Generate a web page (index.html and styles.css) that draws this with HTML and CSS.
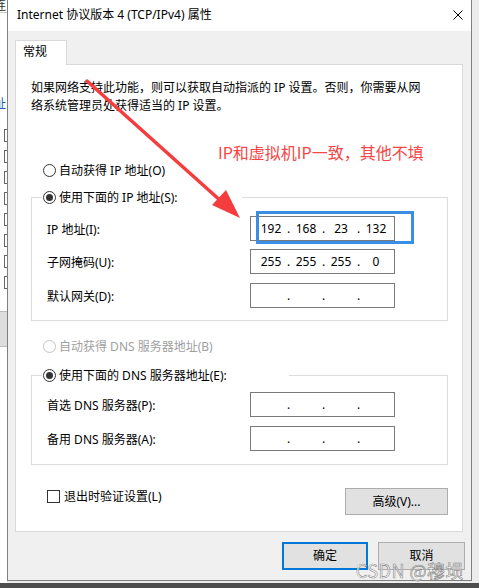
FILE: index.html
```html
<!DOCTYPE html>
<html lang="zh-CN">
<head>
  <meta charset="UTF-8" />
  <title>Internet 协议版本 4 (TCP/IPv4) 属性</title>
  <link rel="stylesheet" href="styles.css">
</head>
<body>

<div class="screen">
  <div class="desk">
    <div class="behind">
      <div class="behind-head">连</div>
      <div class="behind-char">址</div>
      <div class="behind-list">
        <span class="mini-box"></span>
        <span class="mini-box"></span>
        <span class="mini-box"></span>
        <span class="mini-box"></span>
        <span class="mini-box"></span>
        <span class="mini-box"></span>
        <span class="mini-box"></span>
        <span class="mini-box"></span>
      </div>
      <div class="behind-btn"></div>
    </div>

    <div class="dialog">
      <div class="titlebar">
        <span class="title">Internet 协议版本 4 (TCP/IPv4) 属性</span>
        <svg class="close" width="10" height="10" viewBox="0 0 10 10">
          <path d="M0.5 0.5 L9.5 9.5 M9.5 0.5 L0.5 9.5" stroke="#000" stroke-width="1" fill="none"/>
        </svg>
      </div>

      <div class="dlg-body">
        <div class="tabs"><div class="tab">常规</div></div>

        <div class="panel">
          <p class="intro">如果网络支持此功能，则可以获取自动指派的 IP 设置。否则，你需要从网<br>络系统管理员处获得适当的 IP 设置。</p>

          <div class="note">IP和虚拟机IP一致，其他不填</div>

          <div class="radio-row first-radio"><span class="radio"></span>自动获得 IP 地址(O)</div>

          <div class="group ip-group">
            <div class="group-title ip-title"><span class="radio checked"></span>使用下面的 IP 地址(S):</div>
            <div class="field first-field">
              <span class="field-label">IP 地址(I):</span>
              <div class="ip-box">
                <span class="seg">192</span><span class="dot">.</span><span class="seg">168</span><span class="dot">.</span><span class="seg">23</span><span class="dot">.</span><span class="seg">132</span>
                <span class="highlight"></span>
              </div>
            </div>
            <div class="field">
              <span class="field-label">子网掩码(U):</span>
              <div class="ip-box">
                <span class="seg">255</span><span class="dot">.</span><span class="seg">255</span><span class="dot">.</span><span class="seg">255</span><span class="dot">.</span><span class="seg">0</span>
              </div>
            </div>
            <div class="field third-field">
              <span class="field-label">默认网关(D):</span>
              <div class="ip-box">
                <span class="seg"></span><span class="dot">.</span><span class="seg"></span><span class="dot">.</span><span class="seg"></span><span class="dot">.</span><span class="seg"></span>
              </div>
            </div>
          </div>

          <div class="radio-row disabled dns-auto"><span class="radio"></span>自动获得 DNS 服务器地址(B)</div>

          <div class="group dns-group">
            <div class="group-title dns-title"><span class="radio checked"></span>使用下面的 DNS 服务器地址(E):</div>
            <div class="field dns-first">
              <span class="field-label">首选 DNS 服务器(P):</span>
              <div class="ip-box">
                <span class="seg"></span><span class="dot">.</span><span class="seg"></span><span class="dot">.</span><span class="seg"></span><span class="dot">.</span><span class="seg"></span>
              </div>
            </div>
            <div class="field dns-second">
              <span class="field-label">备用 DNS 服务器(A):</span>
              <div class="ip-box">
                <span class="seg"></span><span class="dot">.</span><span class="seg"></span><span class="dot">.</span><span class="seg"></span><span class="dot">.</span><span class="seg"></span>
              </div>
            </div>
          </div>

          <div class="panel-foot">
            <div class="check-row"><span class="checkbox"></span>退出时验证设置(L)</div>
            <button class="btn adv-btn">高级(V)...</button>
          </div>
        </div>

        <div class="buttons">
          <button class="btn ok-btn">确定</button>
          <button class="btn cancel-btn">取消</button>
        </div>
      </div>
    </div>

    <div class="right-strip"></div>
  </div>
  <div class="bottom-strip"></div>

  <svg class="arrow" width="479" height="588" viewBox="0 0 479 588">
    <line x1="87" y1="81" x2="222" y2="202" stroke="#f53d3d" stroke-width="3.5" stroke-linecap="round"/>
    <polygon points="240,218 212,205 226,190" fill="#f53d3d"/>
  </svg>

  <div class="watermark">CSDN @穆埙</div>
</div>

</body>
</html>
```

FILE: styles.css
```css
* {
  box-sizing: border-box;
}

body {
  margin: 0;
  font-family: "Noto Sans", "Noto Sans CJK SC", sans-serif;
  font-size: 12px;
  color: #000;
  background: #ececec;
}

.screen {
  position: relative;
  width: 479px;
  height: 588px;
  overflow: hidden;
  display: flex;
  flex-direction: column;
  background: #ececec;
}

.desk {
  display: flex;
  height: 583px;
}

/* window behind the dialog, only its edge shows */
.behind {
  width: 7px;
  overflow: hidden;
  background: #fff;
  display: flex;
  flex-direction: column;
}

.behind-head {
  height: 13px;
  line-height: 12px;
  margin-left: -6px;
  color: #333;
  border-bottom: 1px solid #c8c8c8;
  white-space: nowrap;
}

.behind-char {
  margin-top: 84px;
  margin-left: -6px;
  height: 14px;
  line-height: 14px;
  color: #2a5caa;
}

.behind-list {
  margin-top: 18px;
  display: flex;
  flex-direction: column;
  gap: 8px;
}

.mini-box {
  display: block;
  width: 10px;
  height: 13px;
  margin-left: 4px;
  border: 1px solid #666;
  background: #fff;
}

.behind-btn {
  margin-top: 22px;
  height: 36px;
  background: #dedede;
  border-top: 1px solid #bbb;
  border-bottom: 1px solid #bbb;
}

.dialog {
  width: 465px;
  height: 581px;
  border: 1px solid #7f7f7f;
  border-top: none;
  display: flex;
  flex-direction: column;
  background: #f0f0f0;
}

.titlebar {
  height: 31px;
  background: #fff;
  display: flex;
  align-items: center;
  justify-content: space-between;
  padding-left: 9px;
  padding-right: 8px;
}

.title {
  line-height: 16px;
  margin-top: -1px;
}

.close {
  display: block;
  margin-top: -1px;
}

.dlg-body {
  flex: 1;
  padding: 9px 8px 0 7px;
}

.tabs {
  display: flex;
  position: relative;
  z-index: 1;
  margin-bottom: -1px;
}

.tab {
  width: 52px;
  height: 25px;
  background: #fff;
  border: 1px solid #d9d9d9;
  border-bottom: none;
  padding-left: 7px;
  line-height: 22px;
}

.panel {
  height: 468px;
  background: #fff;
  border: 1px solid #d9d9d9;
  padding: 14px 0 0 15px;
}

.intro {
  margin: 0;
  line-height: 18px;
  white-space: nowrap;
}

.note {
  margin-top: 28px;
  padding-left: 187px;
  height: 18px;
  line-height: 18px;
  font-family: "Noto Sans CJK SC", sans-serif;
  font-size: 16px;
  color: #f84545;
}

.radio-row {
  display: flex;
  align-items: center;
  height: 20px;
  padding-left: 12px;
}

.first-radio {
  margin-top: -1px;
}

.radio {
  width: 13px;
  height: 13px;
  border: 1px solid #333;
  border-radius: 50%;
  margin-right: 3px;
  display: flex;
  align-items: center;
  justify-content: center;
  background: #fff;
}

.radio.checked::after {
  content: "";
  width: 7px;
  height: 7px;
  border-radius: 50%;
  background: #333;
}

.radio-row.disabled {
  color: #a0a0a0;
}

.radio-row.disabled .radio {
  border-color: #c4c4c4;
}

.group {
  width: 417px;
  border: 1px solid #dcdcdc;
}

.ip-group {
  margin-top: 17px;
  padding-bottom: 12px;
}

.dns-auto {
  margin-top: 15px;
}

.dns-group {
  margin-top: 19px;
  padding-bottom: 13px;
}

.group-title {
  display: flex;
  align-items: center;
  height: 20px;
  margin-top: -11px;
  margin-left: 10px;
  padding-left: 1px;
  background: #fff;
}

.ip-title {
  width: 200px;
}

.dns-title {
  width: 247px;
}

.field {
  display: flex;
  align-items: center;
  height: 25px;
  margin-top: 8px;
}

.first-field {
  margin-top: 9px;
}

.third-field {
  margin-top: 9px;
}

.dns-first {
  margin-top: 7px;
}

.dns-second {
  margin-top: 9px;
}

.field-label {
  width: 203px;
  margin-left: 15px;
}

.ip-box {
  position: relative;
  width: 145px;
  height: 25px;
  border: 1px solid #7a7a7a;
  background: #fff;
  display: grid;
  grid-template-columns: 28px 7px 28px 7px 28px 7px 28px;
  align-items: center;
  padding-left: 6px;
  line-height: 16px;
}

.seg {
  text-align: center;
}

.dot {
  text-align: center;
}

.highlight {
  position: absolute;
  left: 5px;
  top: -6px;
  width: 158px;
  height: 33px;
  border: 3px solid #3a8ee4;
}

.panel-foot {
  width: 417px;
  margin-top: 21px;
  display: flex;
  justify-content: space-between;
  align-items: flex-start;
}

.check-row {
  display: flex;
  align-items: center;
  height: 20px;
  padding-left: 16px;
}

.checkbox {
  width: 13px;
  height: 13px;
  border: 1px solid #333;
  background: #fff;
  margin-right: 4px;
}

.btn {
  font-family: "Noto Sans", "Noto Sans CJK SC", sans-serif;
  font-size: 12px;
  color: #000;
  background: #e1e1e1;
  border: 1px solid #adadad;
  padding: 0;
  line-height: 16px;
}

.adv-btn {
  width: 103px;
  height: 27px;
  margin-top: 2px;
}

.buttons {
  display: flex;
  justify-content: flex-end;
  gap: 10px;
  margin-top: 10px;
  margin-right: -2px;
}

.ok-btn {
  width: 86px;
  height: 28px;
  border: 2px solid #0078d7;
}

.cancel-btn {
  width: 87px;
  height: 28px;
}

.right-strip {
  width: 7px;
  background: #ececec;
}

.bottom-strip {
  height: 5px;
  background: #4d4d4d;
}

/* annotation drawn over the screenshot */
.arrow {
  position: absolute;
  left: 0;
  top: 0;
  pointer-events: none;
}

.watermark {
  position: absolute;
  right: 15px;
  bottom: 7px;
  font-family: "Noto Sans CJK SC", sans-serif;
  font-size: 18px;
  line-height: 22px;
  color: rgba(255, 255, 255, 0.85);
  -webkit-text-stroke: 0.6px rgba(110, 110, 110, 0.85);
  letter-spacing: 0.5px;
}
```
